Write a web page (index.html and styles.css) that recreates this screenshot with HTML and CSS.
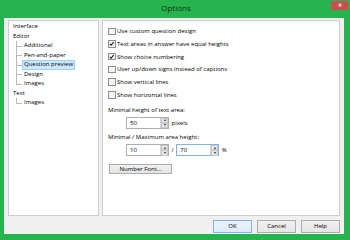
FILE: index.html
```html
<!DOCTYPE html>
<html lang="en">
<head>
    <meta charset="UTF-8">
    <title>Options</title>
    <link rel="stylesheet" href="styles.css">
</head>
<body>
    <div class="window">
        <div class="titlebar">
            <span></span>
            <span class="title">Options</span>
            <button class="close-btn">&#x2715;</button>
        </div>

        <div class="client">
            <div class="panes">
                <!-- Category tree -->
                <div class="tree">
                    <div class="node">Interface</div>
                    <div class="node">Editor</div>
                    <div class="children">
                        <div class="child"><span class="link"></span><span class="label">Additional</span></div>
                        <div class="child"><span class="link"></span><span class="label">Pen-and-paper</span></div>
                        <div class="child"><span class="link"></span><span class="label selected">Question preview</span></div>
                        <div class="child"><span class="link"></span><span class="label">Design</span></div>
                        <div class="child last"><span class="link"></span><span class="label">Images</span></div>
                    </div>
                    <div class="node">Text</div>
                    <div class="children">
                        <div class="child last"><span class="link"></span><span class="label">Images</span></div>
                    </div>
                </div>

                <!-- Question preview page -->
                <div class="page">
                    <label class="check-row"><span class="checkbox"></span>Use custom question design</label>
                    <label class="check-row"><span class="checkbox checked"><svg viewBox="0 0 8 8"><path d="M1.3 4.2 L3.1 6.2 L6.8 1.4" /></svg></span>Text areas in answer have equal heights</label>
                    <label class="check-row"><span class="checkbox checked"><svg viewBox="0 0 8 8"><path d="M1.3 4.2 L3.1 6.2 L6.8 1.4" /></svg></span>Show choice numbering</label>
                    <label class="check-row"><span class="checkbox"></span>User up/down signs instead of captions</label>
                    <label class="check-row"><span class="checkbox"></span>Show vertical lines</label>
                    <label class="check-row"><span class="checkbox"></span>Show horizontal lines</label>

                    <div class="field-label first">Minimal height of text area:</div>
                    <div class="spin-row">
                        <div class="spin"><span class="value">50</span><span class="spin-btns"><span class="up"></span><span class="down"></span></span></div>
                        <span>pixels</span>
                    </div>

                    <div class="field-label">Minimal / Maximum area height:</div>
                    <div class="spin-row">
                        <div class="spin"><span class="value">10</span><span class="spin-btns"><span class="up"></span><span class="down"></span></span></div>
                        <span>/</span>
                        <div class="spin focused"><span class="value">70</span><span class="spin-btns"><span class="up"></span><span class="down"></span></span></div>
                        <span>%</span>
                    </div>

                    <button class="btn font-btn">Number Font...</button>
                </div>
            </div>

            <div class="actions">
                <button class="btn default">OK</button>
                <button class="btn">Cancel</button>
                <button class="btn">Help</button>
            </div>
        </div>
    </div>
</body>
</html>
```

FILE: styles.css
```css
/* General Styling */
* {
    margin: 0;
    padding: 0;
    box-sizing: border-box;
    font-family: 'Open Sans', 'Noto Sans', sans-serif;
}

body {
    width: 350px;
    height: 240px;
    overflow: hidden;
    font-size: 6px;
    color: #000;
}

/* Window frame */
.window {
    width: 350px;
    height: 240px;
    background: #27b34d;
    padding: 0 6px 6px 4px;
    display: flex;
    flex-direction: column;
}

.titlebar {
    height: 18px;
    display: grid;
    grid-template-columns: 1fr auto 1fr;
    align-items: start;
    margin-right: -4px;
}

.title {
    font-size: 8px;
    line-height: 15px;
    color: #10301a;
}

.close-btn {
    justify-self: end;
    width: 17px;
    height: 9px;
    margin-top: 1px;
    border: none;
    background: #c75050;
    color: #fff;
    font-size: 5px;
    font-weight: bold;
    line-height: 9px;
}

/* Client area */
.client {
    flex: 1;
    background: #f0f0f0;
    padding: 2px 4px 0 4px;
    display: flex;
    flex-direction: column;
}

.panes {
    display: flex;
    gap: 3px;
    height: 196px;
}

/* Tree */
.tree {
    width: 91px;
    background: #fff;
    border: 1px solid #cdcdcd;
    padding: 1px 0 0 4px;
}

.node {
    height: 9.5px;
    line-height: 9.5px;
}

.children {
    padding-left: 3px;
}

.child {
    display: flex;
    height: 9.5px;
    line-height: 9.5px;
}

.link {
    width: 6px;
    display: flex;
    flex-direction: column;
}

.link::before {
    content: '';
    height: 50%;
    border-left: 1px solid #b9b9b9;
    border-bottom: 1px solid #b9b9b9;
}

.link::after {
    content: '';
    flex: 1;
    border-left: 1px solid #b9b9b9;
}

.child.last .link::after {
    border-left-color: transparent;
}

.label {
    padding: 0 1px;
    border: 1px solid transparent;
    line-height: 7.5px;
}

.label.selected {
    background: #cce8ff;
    border-color: #99d1ff;
}

/* Page */
.page {
    flex: 1;
    background: #fff;
    border: 1px solid #cdcdcd;
    padding: 4px 0 0 5px;
}

.check-row {
    display: flex;
    align-items: center;
    height: 12.7px;
}

.checkbox {
    width: 7.5px;
    height: 7.5px;
    border: 1px solid #8e8f8f;
    background: #f4f4f4;
    margin-right: 1.5px;
    display: flex;
}

.checkbox svg {
    width: 100%;
    height: 100%;
    fill: none;
    stroke: #111;
    stroke-width: 1.5;
}

.field-label {
    line-height: 10px;
    margin-top: 3.4px;
}

.field-label.first {
    margin-top: 3.6px;
}

.spin-row {
    display: flex;
    align-items: center;
    gap: 2.5px;
    margin: 1.8px 0 0 18px;
}

.spin {
    width: 43px;
    height: 12.4px;
    border: 1px solid #abadb3;
    background: #fff;
    display: flex;
    justify-content: space-between;
}

.spin.focused {
    border-color: #7eb4ea;
}

.value {
    padding-left: 3px;
    line-height: 10.4px;
}

.spin-btns {
    width: 8px;
    display: flex;
    flex-direction: column;
    border-left: 1px solid #d4d4d4;
}

.spin-btns span {
    flex: 1;
    background: #e6e6e6;
    border: 0.5px solid #c9c9c9;
    display: flex;
    align-items: center;
    justify-content: center;
}

.spin-btns .up::before {
    content: '';
    border-left: 1.5px solid transparent;
    border-right: 1.5px solid transparent;
    border-bottom: 2px solid #333;
}

.spin-btns .down::before {
    content: '';
    border-left: 1.5px solid transparent;
    border-right: 1.5px solid transparent;
    border-top: 2px solid #333;
}

/* Buttons */
.btn {
    font-size: 6px;
    color: #000;
    background: linear-gradient(#f0f0f0, #e5e5e5);
    border: 1px solid #acacac;
    height: 12.5px;
}

.font-btn {
    width: 63px;
    height: 10.5px;
    margin: 7.5px 0 0 1px;
    line-height: 8px;
}

.actions {
    display: flex;
    justify-content: flex-end;
    gap: 5px;
    margin-top: 4px;
}

.actions .btn {
    width: 39px;
}

.btn.default {
    border-color: #7eb4ea;
    background: linear-gradient(#ecf4fc, #dcecfc);
}
```
